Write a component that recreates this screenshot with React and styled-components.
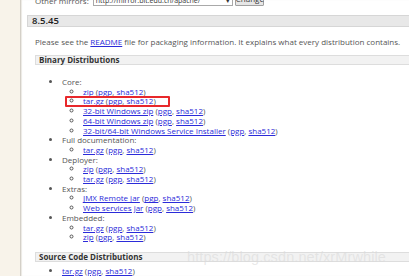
import React from 'react';
import styled, { createGlobalStyle } from 'styled-components';

const GlobalStyle = createGlobalStyle`
  html, body {
    margin: 0;
    padding: 0;
    background: #fff;
  }
  body {
    font-family: "Open Sans", "Noto Sans", "Liberation Sans", sans-serif;
  }
`;

const Page = styled.div`
  display: flex;
  width: 409px;
  height: 276px;
  overflow: hidden;
  position: relative;
`;

const Side = styled.div`
  width: 20px;
  flex-shrink: 0;
  background: #f8f3ea;
`;

const Main = styled.div`
  flex: 1;
  background: #fff;
  border-left: 1px solid #d4d0c8;
  box-shadow: inset 1px 0 1px #ece9e4;
`;

const MirrorRow = styled.div`
  display: flex;
  align-items: flex-end;
  height: 12px;
  margin-top: -6px;
  padding-left: 14px;
  font-size: 8px;
  color: #555;
`;

const MirrorLabel = styled.span`
  line-height: 10px;
  margin-right: 4px;
  white-space: nowrap;
`;

const MirrorSelect = styled.div`
  width: 140px;
  height: 11px;
  box-sizing: border-box;
  border: 1px solid #a9a9a9;
  background: #fff;
  display: flex;
  align-items: center;
  justify-content: space-between;
  padding: 0 2px;
  font-size: 7px;
  color: #333;
  line-height: 9px;
  overflow: hidden;
`;

const MirrorButton = styled.div`
  margin-left: 2px;
  width: 29px;
  height: 13px;
  box-sizing: border-box;
  border: 1px solid #a0a0a0;
  border-radius: 1px;
  background: #e6e6e6;
  font-size: 8px;
  color: #333;
  text-align: center;
  line-height: 9px;
`;

const VersionBar = styled.h2`
  margin: 9px 0 0 6px;
  height: 12px;
  box-sizing: border-box;
  background: #e8e8e8;
  border-top: 1px solid #d6d6d6;
  border-bottom: 1px solid #d6d6d6;
  border-left: 1px solid #d6d6d6;
  padding-left: 4px;
  font-size: 9.5px;
  font-weight: 600;
  line-height: 10px;
  color: #222;
`;

const Body = styled.div`
  padding-left: 14px;
  font-size: 8px;
  color: #555;
`;

const Para = styled.p`
  margin: 10px 0 0;
  line-height: 10px;
  white-space: nowrap;
`;

const SectionBar = styled.h3`
  margin: ${p => p.$top}px 0 0;
  height: 10px;
  box-sizing: border-box;
  background: #f2f2f2;
  border-top: 1px solid #dddddd;
  border-bottom: 1px solid #dddddd;
  border-left: 1px solid #dddddd;
  padding-left: 3px;
  font-size: 8px;
  font-weight: 700;
  line-height: 8px;
  color: #333;
`;

const List = styled.ul`
  margin: ${p => p.$top || 0}px 0 0;
  padding-left: ${p => p.$indent}px;
  list-style-type: ${p => p.$type};
  line-height: 9.7px;
`;

const Item = styled.li`
  position: relative;
  white-space: nowrap;
`;

const Link = styled.a`
  color: #2b2bd9;
  text-decoration: underline;
`;

const Highlight = styled.span`
  position: absolute;
  left: -18px;
  top: -0.5px;
  width: 105px;
  height: 11px;
  box-sizing: border-box;
  border: 2px solid #e8282b;
  border-radius: 1px;
`;

const Watermark = styled.div`
  position: absolute;
  left: 187px;
  top: 249px;
  font-family: "Liberation Sans", Arial, sans-serif;
  font-size: 14.5px;
  color: rgba(218, 218, 218, 0.6);
  letter-spacing: 0.1px;
  white-space: nowrap;
`;

const Sig = ({ name, marked }) => (
  <Item>
    {marked && <Highlight />}
    <Link>{name}</Link> (<Link>pgp</Link>, <Link>sha512</Link>)
  </Item>
);

const groups = [
  { title: 'Core:', files: ['zip', 'tar.gz', '32-bit Windows zip', '64-bit Windows zip', '32-bit/64-bit Windows Service Installer'] },
  { title: 'Full documentation:', files: ['tar.gz'] },
  { title: 'Deployer:', files: ['zip', 'tar.gz'] },
  { title: 'Extras:', files: ['JMX Remote jar', 'Web services jar'] },
  { title: 'Embedded:', files: ['tar.gz', 'zip'] },
];

const App = () => {
  return (
    <Page>
      <GlobalStyle />
      <Side />
      <Main>
        <MirrorRow>
          <MirrorLabel>Other mirrors:</MirrorLabel>
          <MirrorSelect>
            <span>http://mirror.bit.edu.cn/apache/</span>
            <span>▾</span>
          </MirrorSelect>
          <MirrorButton>Change</MirrorButton>
        </MirrorRow>
        <VersionBar>8.5.45</VersionBar>
        <Body>
          <Para>
            Please see the <Link>README</Link> file for packaging information. It explains what every distribution contains.
          </Para>
          <SectionBar $top={8}>Binary Distributions</SectionBar>
          <List $type="disc" $indent={27} $top={12}>
            {groups.map((g, i) => (
              <Item key={i}>
                {g.title}
                <List $type="circle" $indent={21}>
                  {g.files.map((f, j) => (
                    <Sig key={j} name={f} marked={i === 0 && j === 1} />
                  ))}
                </List>
              </Item>
            ))}
          </List>
          <SectionBar $top={10}>Source Code Distributions</SectionBar>
          <List $type="disc" $indent={27} $top={4}>
            <Sig name="tar.gz" />
          </List>
        </Body>
      </Main>
      <Watermark>https://blog.csdn.net/xrMrwhile</Watermark>
    </Page>
  );
};

export default App;
